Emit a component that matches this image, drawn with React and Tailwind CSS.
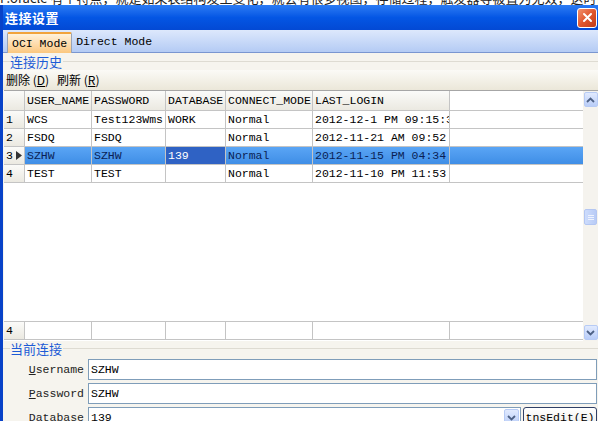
import React from 'react'

const mono = { fontFamily: '"Liberation Mono", "Noto Sans CJK SC", monospace' }
const cjk = { fontFamily: '"Noto Sans CJK SC", "Liberation Sans", sans-serif' }

const cols = [
  { key: 'user', label: 'USER_NAME', w: 'w-[67px]' },
  { key: 'pwd', label: 'PASSWORD', w: 'w-[74px]' },
  { key: 'db', label: 'DATABASE', w: 'w-[60px]' },
  { key: 'mode', label: 'CONNECT_MODE', w: 'w-[87px]' },
  { key: 'last', label: 'LAST_LOGIN', w: 'w-[137px]' },
]

const rows = [
  { user: 'WCS', pwd: 'Test123Wms', db: 'WORK', mode: 'Normal', last: '2012-12-1 PM 09:15:33' },
  { user: 'FSDQ', pwd: 'FSDQ', db: '', mode: 'Normal', last: '2012-11-21 AM 09:52' },
  { user: 'SZHW', pwd: 'SZHW', db: '139', mode: 'Normal', last: '2012-11-15 PM 04:34' },
  { user: 'TEST', pwd: 'TEST', db: '', mode: 'Normal', last: '2012-11-10 PM 11:53' },
]

function Chevron({ up }) {
  return (
    <svg width="9" height="6" viewBox="0 0 9 6">
      <path d={up ? 'M1 5 L4.5 1.5 L8 5' : 'M1 1 L4.5 4.5 L8 1'} fill="none" stroke="#4d6185" strokeWidth="1.8" />
    </svg>
  )
}

function ScrollBtn({ up }) {
  return (
    <div className="h-[15px] w-[14px] rounded-[2px] border border-[#b7cbf5] bg-gradient-to-b from-[#e1eafe] to-[#b9cdf8] flex items-center justify-center">
      <Chevron up={up} />
    </div>
  )
}

function Cell({ w, children, cls = '' }) {
  return (
    <div className={`${w} shrink-0 h-full border-r border-[#c4c4c4] px-[2px] flex items-center overflow-hidden whitespace-nowrap ${cls}`}>
      {children}
    </div>
  )
}

function Field({ label, value }) {
  return (
    <div className="flex items-center h-[23px]">
      <div className="w-[81px] text-right text-[11.5px] text-[#222]" style={mono}>
        <span className="underline">{label[0]}</span>{label.slice(1)}
      </div>
      <div className="ml-[4px] flex-1 h-[21px] border border-[#7f9db9] bg-white flex items-center px-[2px] text-[11.5px] text-black" style={mono}>
        {value}
      </div>
    </div>
  )
}

export default function App() {
  return (
    <div className="w-[598px] h-[421px] overflow-hidden bg-white flex flex-col">
      <div className="h-[5px] overflow-hidden shrink-0">
        <div className="-mt-[9px] text-[13px] leading-[14px] whitespace-nowrap text-[#222]" style={cjk}>
          P.oracle 有个特点，就是如果表结构发生变化，就会有很多视图，存储过程，触发器等被置为无效，这时候要把这些
        </div>
      </div>

      <div className="flex-1 flex flex-col border-l-[3px] border-[#0842c8] bg-[#f6f4ee] min-h-0">
        <div className="h-[25px] shrink-0 bg-gradient-to-b from-[#2b7bf4] via-[#0456e4] to-[#0349d4] flex items-center justify-between pl-[2px] pr-[1px]">
          <span className="text-white text-[13px] font-bold tracking-[0.5px]" style={cjk}>连接设置</span>
          <div className="w-[20px] h-[20px] rounded-[3px] border border-white bg-gradient-to-br from-[#f0906c] via-[#e0562e] to-[#c13b17] flex items-center justify-center">
            <svg width="11" height="11" viewBox="0 0 11 11">
              <path d="M2 2 L9 9 M9 2 L2 9" stroke="white" strokeWidth="2" strokeLinecap="round" />
            </svg>
          </div>
        </div>

        <div className="h-[23px] shrink-0 bg-gradient-to-b from-[#dde8fc] to-[#b4cbf4] border-b border-[#7a96d0] flex items-end pl-[4px]">
          <div className="h-[21px] -mb-[1px] px-[4px] flex items-center border border-b-0 border-[#98a4b8] border-t-2 border-t-[#f1a33c] rounded-t-[2px] bg-gradient-to-b from-[#fff2dc] to-[#fbc77e] text-[11.5px] text-black" style={mono}>
            OCI Mode
          </div>
          <div className="h-[20px] px-[4px] flex items-center text-[11.5px] text-black" style={mono}>
            Direct Mode
          </div>
        </div>

        <div className="h-[17px] shrink-0 flex items-center pl-[7px] relative">
          <div className="absolute left-0 right-0 top-[8px] border-t border-[#dedbd2]" />
          <span className="relative bg-[#f6f4ee] pr-[1px] text-[13px] leading-[14px] text-[#1c5bd6]" style={cjk}>连接历史</span>
        </div>

        <div className="h-[20px] shrink-0 bg-gradient-to-b from-[#fbfaf6] to-[#ebe7d9] flex items-center pl-[3px] gap-[8px] text-[12px] text-black" style={cjk}>
          <span>删除 (<span className="underline">D</span>)</span>
          <span>刷新 (<span className="underline">R</span>)</span>
        </div>

        <div className="h-[251px] shrink-0 flex bg-white border-t border-[#a6a6a6] ml-[1px]">
          <div className="flex-1 flex flex-col text-[11.5px] text-black" style={mono}>
            <div className="flex h-[20px] border-b border-[#c4c4c4]">
              <Cell w="w-[21px]" cls="bg-gradient-to-b from-[#fbfbf9] to-[#ebe9e1]" />
              {cols.map(c => (
                <Cell key={c.key} w={c.w} cls="bg-gradient-to-b from-[#fbfbf9] to-[#ebe9e1]">{c.label}</Cell>
              ))}
            </div>
            {rows.map((r, i) => {
              const sel = i === 2
              return (
                <div key={i} className={`flex h-[18px] border-b border-[#c4c4c4] ${sel ? 'bg-gradient-to-b from-[#5aa5f5] to-[#3f8ee6]' : ''}`}>
                  <Cell w="w-[21px]" cls="bg-gradient-to-b from-[#fbfbf9] to-[#ebe9e1] justify-between">
                    <span>{i + 1}</span>
                    {sel && (
                      <svg width="6" height="9" viewBox="0 0 6 9"><path d="M0 0 L6 4.5 L0 9 Z" fill="#333" /></svg>
                    )}
                  </Cell>
                  {cols.map(c => (
                    <Cell key={c.key} w={c.w} cls={sel && c.key === 'db' ? 'bg-[#2f62c4] text-white' : sel ? 'text-[#0a1f55]' : ''}>
                      {r[c.key]}
                    </Cell>
                  ))}
                </div>
              )
            })}
            <div className="flex-1" />
            <div className="flex h-[19px] border-t border-[#a8a8a8] border-b border-[#c4c4c4] mb-[1px]">
              <Cell w="w-[21px]" cls="bg-gradient-to-b from-[#fbfbf9] to-[#ebe9e1]">4</Cell>
              {cols.map(c => (
                <Cell key={c.key} w={c.w} />
              ))}
            </div>
          </div>
          <div className="w-[15px] shrink-0 bg-[#f5f3ee] flex flex-col items-center justify-between py-[1px]">
            <ScrollBtn up />
            <div className="mt-[102px] h-[16px] w-[13px] rounded-[2px] border border-[#b3c6f2] bg-gradient-to-r from-[#cddcfc] to-[#b8cbf6] flex flex-col items-center justify-center gap-[1px]">
              <div className="w-[6px] border-t border-[#eef3fe]" />
              <div className="w-[6px] border-t border-[#eef3fe]" />
              <div className="w-[6px] border-t border-[#eef3fe]" />
            </div>
            <div className="flex-1" />
            <ScrollBtn />
          </div>
        </div>

        <div className="h-[16px] shrink-0 flex items-center pl-[7px] relative">
          <div className="absolute left-0 right-0 top-[7px] border-t border-[#dedbd2]" />
          <span className="relative bg-[#f6f4ee] pr-[1px] text-[13px] leading-[14px] text-[#1c5bd6]" style={cjk}>当前连接</span>
        </div>

        <div className="flex flex-col gap-[1px] pr-[1px] pt-[1px]">
          <Field label="Username" value="SZHW" />
          <Field label="Password" value="SZHW" />
          <div className="flex items-center h-[23px]">
            <div className="w-[81px] text-right text-[11.5px] text-[#222]" style={mono}>
              <span className="underline">D</span>atabase
            </div>
            <div className="ml-[4px] w-[433px] h-[21px] border border-[#7f9db9] bg-white flex items-center justify-between pl-[2px] pr-[1px] text-[11.5px] text-black" style={mono}>
              <span>139</span>
              <div className="h-[17px] w-[15px] rounded-[2px] border border-[#b7cbf5] bg-gradient-to-b from-[#e1eafe] to-[#b9cdf8] flex items-center justify-center">
                <Chevron />
              </div>
            </div>
            <div className="ml-[2px] flex-1 h-[21px] rounded-[3px] border border-[#2f3f66] bg-gradient-to-b from-white to-[#ecebe6] flex items-center justify-center text-[11.5px] text-black" style={mono}>
              tnsEdit(<span className="underline">E</span>)
            </div>
          </div>
        </div>
      </div>
    </div>
  )
}
